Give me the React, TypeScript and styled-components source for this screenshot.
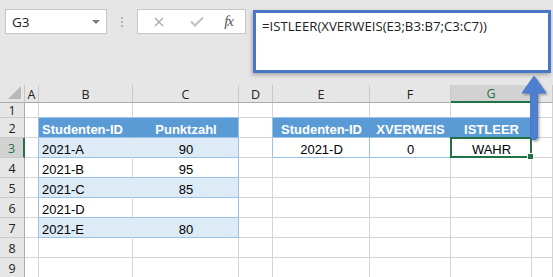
import styled, { createGlobalStyle } from 'styled-components'

const GlobalStyle = createGlobalStyle`
  html, body {
    margin: 0;
    padding: 0;
    background: #e6e6e6;
  }
`

const GRID = '#d4d4d4'
const TBL_LINE = '#9bc2e6'
const TBL_HEAD = '#5b9bd5'
const TBL_BAND = '#ddebf7'
const EXCEL_GREEN = '#217346'

type Align = 'left' | 'center'

interface CellSpec {
  text?: string
  bg?: string
  right?: string
  bottom?: string
  align?: Align
  head?: boolean
  selected?: boolean
}

// H is only a sliver at the right edge, its letter is not visible
const COLUMNS = ['A', 'B', 'C', 'D', 'E', 'F', 'G', '']

const blank = (): CellSpec => ({})

const buildRows = (): CellSpec[][] => {
  const rows: CellSpec[][] = []
  for (let r = 1; r <= 9; r++) rows.push(COLUMNS.map(blank))

  // row 1: blue line above both tables
  ;[1, 2, 4, 5, 6].forEach((c) => (rows[0][c].bottom = TBL_LINE))

  // left table B2:C7
  const left = [
    ['Studenten-ID', 'Punktzahl'],
    ['2021-A', '90'],
    ['2021-B', '95'],
    ['2021-C', '85'],
    ['2021-D', ''],
    ['2021-E', '80'],
  ]
  left.forEach(([id, score], i) => {
    const row = rows[i + 1]
    const isHead = i === 0
    const band = i % 2 === 1
    const bg = isHead ? TBL_HEAD : band ? TBL_BAND : '#fff'
    row[0].right = TBL_LINE
    row[1] = { text: id, bg, head: isHead, right: isHead || band ? bg : GRID, bottom: TBL_LINE }
    row[2] = { text: score, bg, head: isHead, align: 'center', right: TBL_LINE, bottom: TBL_LINE }
  })

  // right table E2:G3
  rows[1][3].right = TBL_LINE
  rows[2][3].right = TBL_LINE
  ;['Studenten-ID', 'XVERWEIS', 'ISTLEER'].forEach((t, i) => {
    rows[1][4 + i] = {
      text: t,
      bg: TBL_HEAD,
      head: true,
      align: 'center',
      right: i === 2 ? TBL_LINE : TBL_HEAD,
      bottom: TBL_LINE,
    }
  })
  ;['2021-D', '0', 'WAHR'].forEach((t, i) => {
    rows[2][4 + i] = {
      text: t,
      align: 'center',
      right: TBL_LINE,
      bottom: TBL_LINE,
      selected: i === 2,
    }
  })
  return rows
}

const App = () => {
  const rows = buildRows()

  return (
    <>
      <GlobalStyle />
      <Window>
        <TopBar>
          <NameBox>
            <span>G3</span>
            <Caret />
          </NameBox>
          <Grip>
            <i />
            <i />
            <i />
          </Grip>
          <FuncBox>
            <FuncButton>
              <svg width="10" height="10" viewBox="0 0 10 10">
                <path d="M1 1L9 9M9 1L1 9" stroke="#a8a8a8" strokeWidth="1.3" fill="none" />
              </svg>
            </FuncButton>
            <FuncButton>
              <svg width="14" height="11" viewBox="0 0 14 11">
                <path d="M1 5.5L5 9.5L13 1.5" stroke="#c4c4c4" strokeWidth="2.2" fill="none" />
              </svg>
            </FuncButton>
            <FxLabel>fx</FxLabel>
          </FuncBox>
          <FormulaBar>=ISTLEER(XVERWEIS(E3;B3:B7;C3:C7))</FormulaBar>
        </TopBar>

        <Sheet>
          <Corner />
          {COLUMNS.map((c, i) => (
            <ColHead key={i} $active={c === 'G'}>
              {c}
            </ColHead>
          ))}
          {rows.map((row, ri) => (
            <RowGroup key={ri}>
              <RowHead $active={ri === 2}>{ri + 1}</RowHead>
              {row.map((cell, ci) => (
                <Cell
                  key={ci}
                  $bg={cell.bg}
                  $right={cell.right}
                  $bottom={cell.bottom}
                  $align={cell.align}
                  $head={cell.head}
                  $selected={cell.selected}
                >
                  {cell.text}
                </Cell>
              ))}
            </RowGroup>
          ))}
        </Sheet>

        <Arrow width="36" height="76" viewBox="0 0 36 76">
          <defs>
            <filter id="arrowShadow" x="-30%" y="-10%" width="160%" height="130%">
              <feDropShadow dx="1.5" dy="1.5" stdDeviation="1.2" floodColor="#000" floodOpacity="0.35" />
            </filter>
          </defs>
          <g filter="url(#arrowShadow)">
            <path
              d="M16 4 L28 21 L19.5 21 L19.5 66 Q16 70 12.5 66 L12.5 21 L4 21 Z"
              fill="#4f7fcf"
              stroke="#4372c2"
              strokeWidth="0.8"
            />
          </g>
        </Arrow>
      </Window>
    </>
  )
}

const Window = styled.div`
  position: relative;
  width: 553px;
  height: 277px;
  overflow: hidden;
  background: #e6e6e6;
  font-family: 'Liberation Sans', Arial, sans-serif;
`

const TopBar = styled.div`
  height: 85px;
  box-sizing: border-box;
  display: flex;
  align-items: flex-start;
  padding: 9px 0 0 5px;
  font-family: 'Open Sans', 'Liberation Sans', sans-serif;
`

const NameBox = styled.div`
  width: 102px;
  height: 25px;
  box-sizing: border-box;
  display: flex;
  align-items: center;
  justify-content: space-between;
  padding: 0 6px 0 6px;
  background: #fff;
  border: 1px solid #c6c6c6;
  font-size: 13.5px;
  color: #222;
`

const Caret = styled.span`
  width: 0;
  height: 0;
  border-left: 4px solid transparent;
  border-right: 4px solid transparent;
  border-top: 4px solid #7a7a7a;
`

const Grip = styled.div`
  display: flex;
  flex-direction: column;
  gap: 2px;
  margin: 8px 0 0 14px;

  > i {
    width: 2px;
    height: 2px;
    background: #b0b0b0;
  }
`

const FuncBox = styled.div`
  width: 109px;
  height: 25px;
  margin-left: 14px;
  box-sizing: border-box;
  display: flex;
  align-items: center;
  padding: 0 8px 0 11px;
  justify-content: space-between;
  background: #fff;
  border: 1px solid #c6c6c6;
`

const FuncButton = styled.span`
  display: flex;
  align-items: center;
  justify-content: center;
  width: 20px;
`

const FxLabel = styled.span`
  font-family: 'Liberation Serif', 'Times New Roman', serif;
  font-style: italic;
  font-size: 15px;
  color: #555;
  letter-spacing: -1px;
  padding-right: 4px;
`

const FormulaBar = styled.div`
  width: 298px;
  height: 63px;
  margin: 1px 0 0 7px;
  box-sizing: border-box;
  padding: 4px 6px;
  background: #fff;
  border: 3px solid #4a76c6;
  box-shadow: -1px 2px 4px rgba(0, 0, 0, 0.28);
  font-size: 13.2px;
  color: #222;
  white-space: nowrap;
`

const Sheet = styled.div`
  display: grid;
  grid-template-columns: 25px 14px 94px 106px 34px 97px 81px 81px 21px;
  grid-template-rows: 18px 15px repeat(8, 20px);
`

const RowGroup = styled.div`
  display: contents;
`

const Corner = styled.div`
  position: relative;
  background: #e6e6e6;
  border-right: 1px solid #c8c8c8;
  border-bottom: 1px solid #ababab;

  &::after {
    content: '';
    position: absolute;
    right: 3px;
    bottom: 3px;
    border-left: 13px solid transparent;
    border-bottom: 13px solid #b9b9b9;
  }
`

const ColHead = styled.div<{ $active?: boolean }>`
  display: flex;
  align-items: center;
  justify-content: center;
  box-sizing: border-box;
  background: ${(p) => (p.$active ? '#d2d2d2' : '#e6e6e6')};
  color: ${(p) => (p.$active ? EXCEL_GREEN : '#222')};
  border-right: 1px solid #c8c8c8;
  border-bottom: ${(p) => (p.$active ? `2px solid ${EXCEL_GREEN}` : '1px solid #ababab')};
  font-family: 'Open Sans', 'Liberation Sans', sans-serif;
  font-size: 12.5px;
  padding-top: 1px;
`

const RowHead = styled.div<{ $active?: boolean }>`
  display: flex;
  align-items: center;
  justify-content: center;
  box-sizing: border-box;
  background: ${(p) => (p.$active ? '#d2d2d2' : '#e6e6e6')};
  color: ${(p) => (p.$active ? EXCEL_GREEN : '#222')};
  border-bottom: 1px solid #c8c8c8;
  border-right: ${(p) => (p.$active ? `2px solid ${EXCEL_GREEN}` : '1px solid #ababab')};
  font-family: 'Open Sans', 'Liberation Sans', sans-serif;
  font-size: 12.5px;
  padding-top: 1px;
`

const Cell = styled.div<{
  $bg?: string
  $right?: string
  $bottom?: string
  $align?: Align
  $head?: boolean
  $selected?: boolean
}>`
  position: relative;
  display: flex;
  align-items: flex-end;
  justify-content: ${(p) => (p.$align === 'center' ? 'center' : 'flex-start')};
  box-sizing: border-box;
  padding: 0 2px 0 3px;
  background: ${(p) => p.$bg ?? '#fff'};
  border-right: 1px solid ${(p) => p.$right ?? GRID};
  border-bottom: 1px solid ${(p) => p.$bottom ?? GRID};
  color: ${(p) => (p.$head ? '#fff' : '#000')};
  font-weight: ${(p) => (p.$head ? 700 : 400)};
  font-size: 13px;
  line-height: 15px;
  white-space: nowrap;

  ${(p) =>
    p.$selected &&
    `
    &::after {
      content: '';
      position: absolute;
      left: -1px;
      top: -1px;
      right: -1px;
      bottom: -1px;
      border: 2px solid ${EXCEL_GREEN};
    }
    &::before {
      content: '';
      position: absolute;
      right: -3px;
      bottom: -3px;
      width: 5px;
      height: 5px;
      background: ${EXCEL_GREEN};
      border: 1px solid #fff;
      z-index: 1;
    }
  `}
`

const Arrow = styled.svg`
  position: absolute;
  left: 518px;
  top: 72px;
`

export default App
